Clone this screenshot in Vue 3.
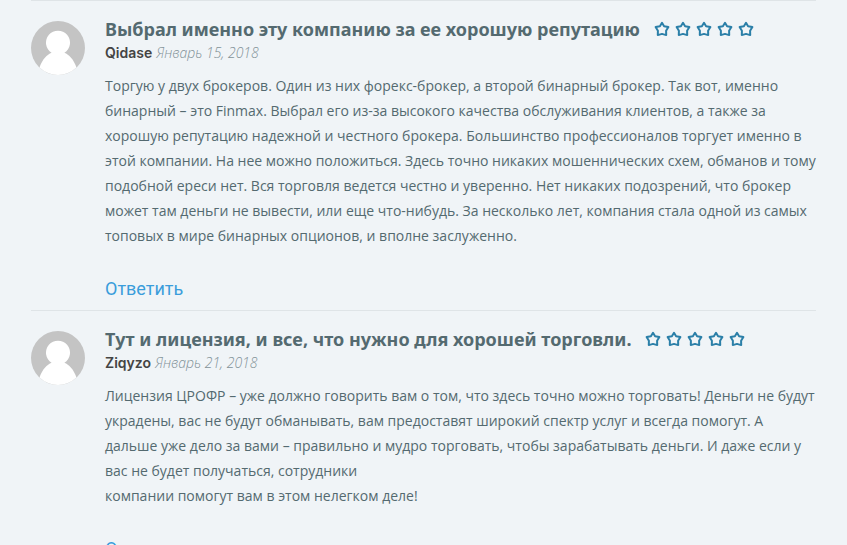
<script setup>
import { ref } from "vue";

const STAR_COUNT = 5;

const reviews = ref([
  {
    id: "qidase",
    title: "Выбрал именно эту компанию за ее хорошую репутацию",
    author: "Qidase",
    dateTime: "2018-01-15",
    date: "Январь 15, 2018",
    text: "Торгую у двух брокеров. Один из них форекс-брокер, а второй бинарный брокер. Так вот, именно бинарный – это Finmax. Выбрал его из-за высокого качества обслуживания клиентов, а также за хорошую репутацию надежной и честного брокера. Большинство профессионалов торгует именно в этой компании. На нее можно положиться. Здесь точно никаких мошеннических схем, обманов и тому подобной ереси нет. Вся торговля ведется честно и уверенно. Нет никаких подозрений, что брокер может там деньги не вывести, или еще что-нибудь. За несколько лет, компания стала одной из самых топовых в мире бинарных опционов, и вполне заслуженно."
  },
  {
    id: "ziqyzo",
    title: "Тут и лицензия, и все, что нужно для хорошей торговли.",
    author: "Ziqyzo",
    dateTime: "2018-01-21",
    date: "Январь 21, 2018",
    text: "Лицензия ЦРОФР – уже должно говорить вам о том, что здесь точно можно торговать! Деньги не будут украдены, вас не будут обманывать, вам предоставят широкий спектр услуг и всегда помогут. А дальше уже дело за вами – правильно и мудро торговать, чтобы зарабатывать деньги. И даже если у вас не будет получаться, сотрудники\nкомпании помогут вам в этом нелегком деле!"
  }
]);
</script>

<template>
  <main class="reviews">
    <article v-for="review in reviews" :key="review.id" class="review">
      <svg class="review-avatar" viewBox="0 0 54 54" aria-hidden="true">
        <circle cx="27" cy="27" r="27" fill="#c4c4c4" />
        <path d="M8.5 46.6C11.5 38 16 33.8 20.6 31.8A12 12 0 1 1 33.4 31.8C38 33.8 42.5 38 45.5 46.6A27 27 0 0 1 8.5 46.6Z" fill="#fff" />
      </svg>
      <div class="review-main">
        <header class="review-head">
          <h3 class="review-title">{{ review.title }}</h3>
          <span class="review-stars">
            <svg v-for="n in STAR_COUNT" :key="n" class="review-star" viewBox="0 0 16 16" aria-hidden="true">
              <path d="M8 1.8L10.1 5.2L14.4 6L12.1 9.8L12.2 14.1L8 12.9L3.8 14.1L3.9 9.8L1.6 6L5.9 5.2Z" />
            </svg>
          </span>
        </header>
        <div class="review-meta">
          <strong>{{ review.author }}</strong>
          <time :datetime="review.dateTime">{{ review.date }}</time>
        </div>
        <p class="review-text">{{ review.text }}</p>
        <a class="review-reply" :href="`#reply-${review.id}`">Ответить</a>
      </div>
    </article>
  </main>
</template>

<style>
body {
  margin: 0;
  background: #f0f4f7;
}
</style>

<style scoped>
.reviews {
  padding: 0 31px;
  font-family: "Open Sans", "Noto Sans", sans-serif;
  font-size: 14px;
  color: #546a70;
}

.review {
  display: flex;
  align-items: flex-start;
  gap: 20px;
  padding: 20px 0 9px;
  border-top: 1px solid #dfe4e7;
}

.review-avatar {
  flex: none;
  width: 54px;
  height: 54px;
}

.review-main {
  flex: 1;
  min-width: 0;
  margin-top: -4px;
}

.review-head {
  display: flex;
  align-items: center;
  gap: 14px;
}

.review-title {
  margin: 0;
  font-family: "Noto Sans", "Open Sans", sans-serif;
  font-size: 18px;
  line-height: 24px;
  font-weight: 700;
}

.review-stars {
  display: flex;
  flex: none;
  gap: 5px;
}

.review-star {
  width: 16px;
  height: 16px;
  fill: none;
  stroke: #2b7fa8;
  stroke-width: 2;
  stroke-linejoin: round;
}

.review-meta {
  display: flex;
  gap: 4px;
  line-height: 24px;
}

.review-meta strong {
  font-family: Inter, "Open Sans", sans-serif;
  font-weight: 600;
  color: #444;
}

.review-meta time {
  font-style: italic;
  font-weight: 300;
  color: #829297;
}

.review-text {
  margin: 8px 0 28px;
  line-height: 25px;
  white-space: pre-line;
}

.review-reply {
  display: inline-block;
  font-family: Roboto, "Open Sans", sans-serif;
  font-size: 18px;
  line-height: 25px;
  color: #3a9ddb;
  text-decoration: none;
  vertical-align: top;
}
</style>
